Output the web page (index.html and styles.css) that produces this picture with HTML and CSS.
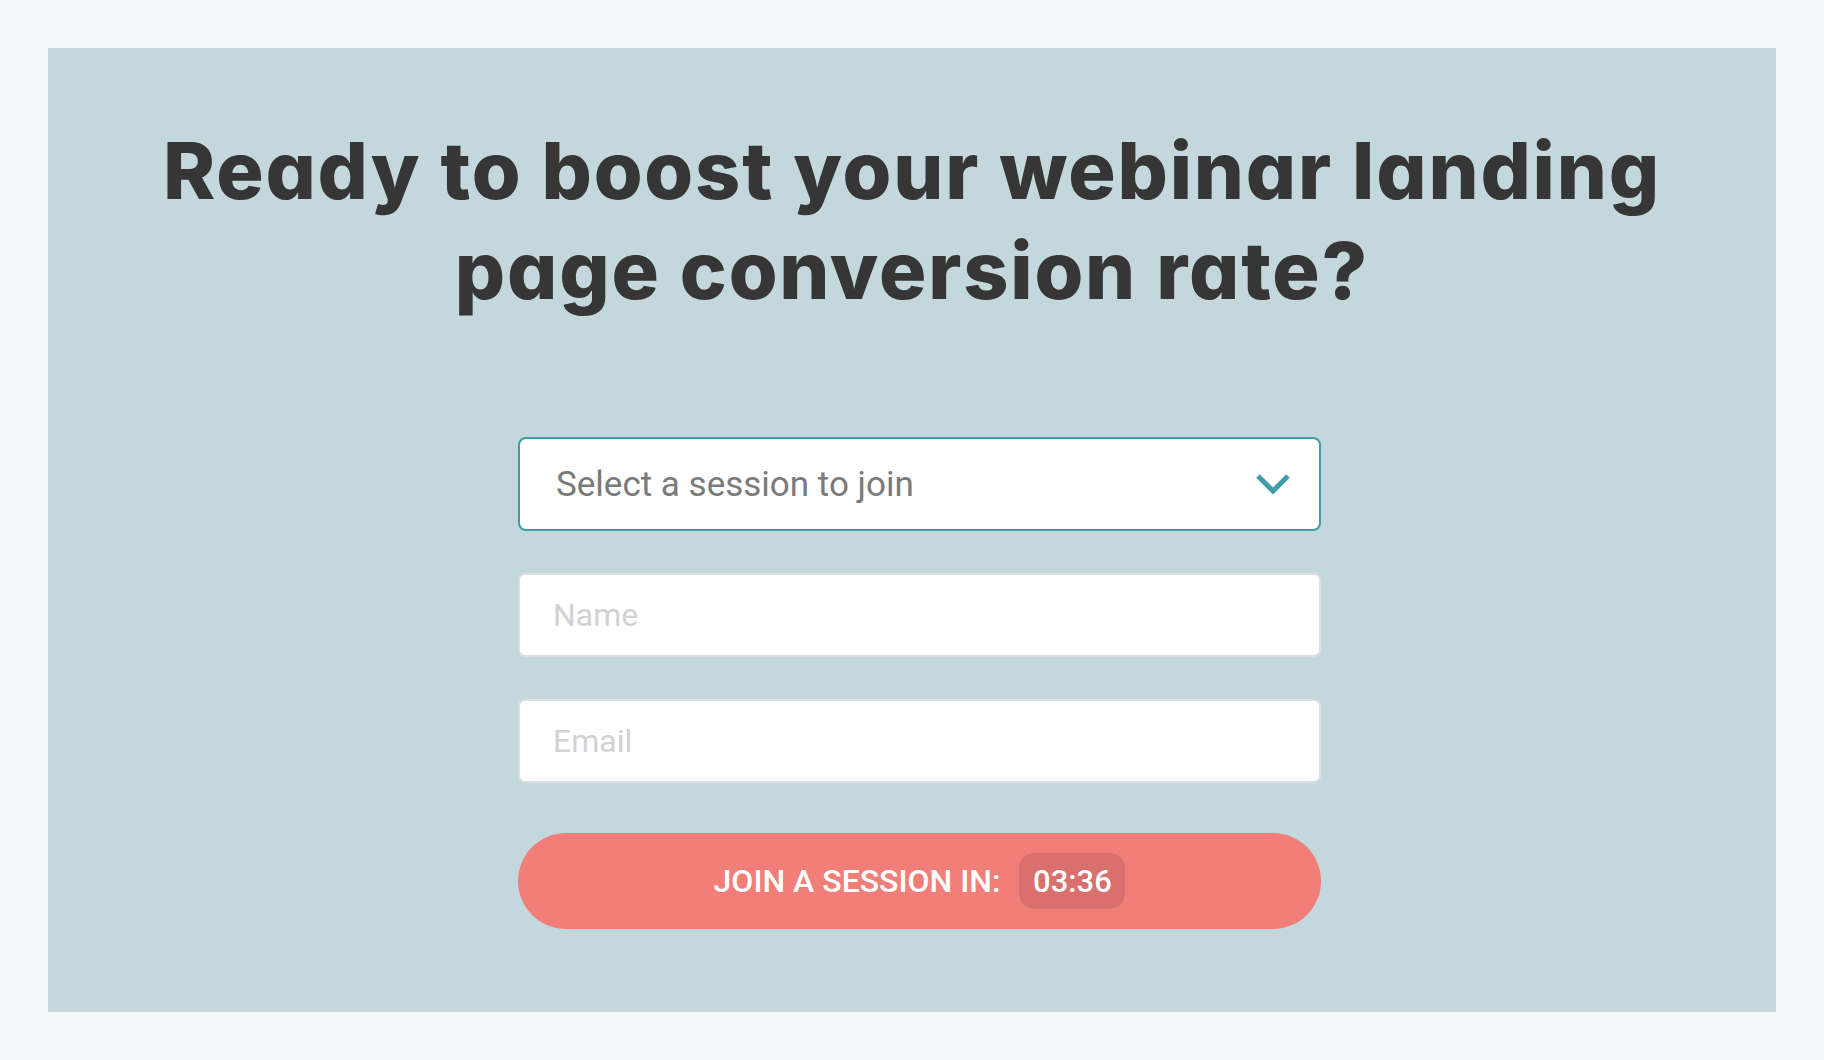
FILE: index.html
```html
<!DOCTYPE html>
<html lang="en">
<head>
<meta charset="utf-8">
<title>Webinar</title>
<link rel="stylesheet" href="styles.css">
</head>
<body>
<section class="panel">
  <h1 class="title">Ready to boost your webinar landing page conversion rate?</h1>
  <form class="form">
    <div class="select">
      <span class="select-text">Select a session to join</span>
      <svg class="chevron" width="36" height="22" viewBox="0 0 36 22"><polyline points="3,3 18,18 33,3" fill="none" stroke="#3b9eaa" stroke-width="5"/></svg>
    </div>
    <div class="input"><span class="ph">Name</span></div>
    <div class="input"><span class="ph">Email</span></div>
    <button class="btn" type="button"><span class="btn-label">JOIN A SESSION IN:</span><span class="timer">03:36</span></button>
  </form>
</section>
</body>
</html>
```
FILE: styles.css
```css
html, body { margin: 0; padding: 0; }
body {
  background: #f4f6f8;
  padding: 48px;
  height: 1060px;
  box-sizing: border-box;
}
.panel {
  background: #c3d7dc;
  height: 964px;
  box-sizing: border-box;
  padding-top: 72px;
}
.title {
  margin: 0;
  font-family: Inter, "DejaVu Sans", sans-serif;
  font-feature-settings: "cv11" 1;
  font-weight: 800;
  font-size: 79px;
  line-height: 100px;
  letter-spacing: 1.8px;
  color: #363636;
  text-align: center;
  padding: 0 90px;
}
.form {
  margin: 117px 455px 0 470px;
  display: flex;
  flex-direction: column;
  font-family: Roboto, "Liberation Sans", sans-serif;
}
.select {
  height: 94px;
  box-sizing: border-box;
  background: #fff;
  border: 2px solid #3e9ca8;
  border-radius: 8px;
  display: flex;
  align-items: center;
  justify-content: space-between;
  padding: 0 28px 0 36px;
}
.select-text {
  font-size: 35px;
  color: #7a7a7a;
}
.chevron { display: block; }
.input {
  margin-top: 42px;
  height: 84px;
  box-sizing: border-box;
  background: #fff;
  border: 2px solid #dcdfe0;
  border-radius: 7px;
  display: flex;
  align-items: center;
  padding-left: 33px;
}
.input + .input { margin-top: 42px; }
.ph {
  font-size: 32px;
  color: #d2d2d2;
}
.btn {
  margin-top: 50px;
  height: 96px;
  border: 0;
  border-radius: 48px;
  background: #f17e78;
  display: flex;
  align-items: center;
  justify-content: center;
  gap: 19px;
  color: #fff;
  font-family: Roboto, "Liberation Sans", sans-serif;
  padding: 0;
}
.btn-label {
  font-size: 32px;
  font-weight: 500;
}
.timer {
  background: #d9706d;
  border-radius: 15px;
  height: 56px;
  width: 106px;
  display: flex;
  align-items: center;
  justify-content: center;
  font-size: 31px;
  font-weight: 500;
}
```
